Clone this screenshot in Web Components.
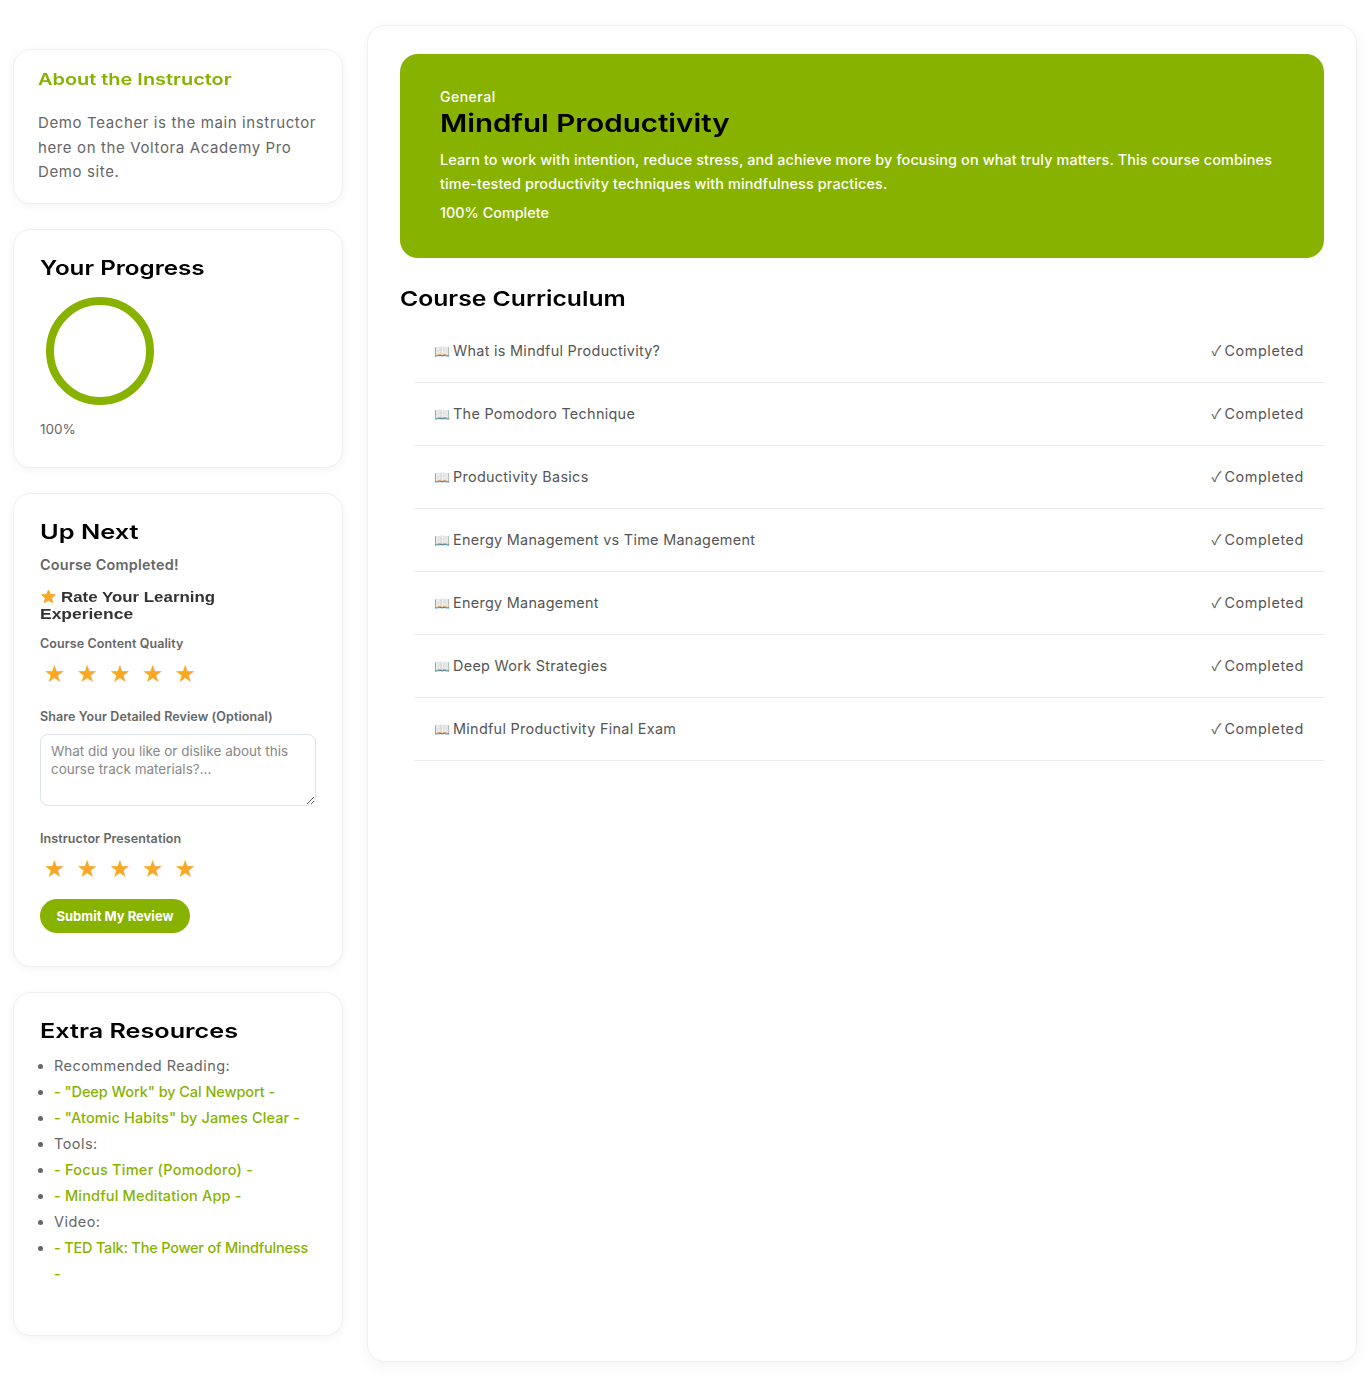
<!DOCTYPE html>
<html lang="en"><head><meta charset="utf-8"><title>Mindful Productivity</title>
<style>
html,body{margin:0;padding:0;background:#fff}
body{font-family:Inter,"Noto Sans",sans-serif;color:#666}
</style></head><body>
<course-page>
  <div slot="side">
    <side-card style="--pad:18px 24px 18.5px 24px">
      <card-title style="color:#88b200;font-size:16px;line-height:22px;--sx:1.245">About the Instructor</card-title>
      <about-text>Demo Teacher is the main instructor here on the Voltora Academy Pro Demo site.</about-text>
    </side-card>
    <side-card style="--pad:24px 26px 28px 26px">
      <card-title>Your Progress</card-title>
      <progress-ring value="100"></progress-ring>
    </side-card>
    <side-card style="--pad:24px 26px 33px 26px"><up-next></up-next></side-card>
    <side-card style="--pad:24px 26px 48px 26px"><card-title style="--sx:1.26">Extra Resources</card-title><resource-list></resource-list></side-card>
  </div>
  <main-panel slot="main">
    <course-hero></course-hero>
    <curriculum-list></curriculum-list>
  </main-panel>
</course-page>
<script>
const HEAD='Inter,"Liberation Sans",sans-serif';
const BODY='Inter,"Noto Sans",sans-serif';
function def(name,html){customElements.define(name,class extends HTMLElement{connectedCallback(){if(this.shadowRoot)return;const r=this.attachShadow({mode:'open'});r.innerHTML=html}})}

def('course-page',`<style>:host{display:block;width:1369px;height:1378px;box-sizing:border-box;background:#fff;overflow:hidden}
.g{display:grid;grid-template-columns:330px 990px;column-gap:24px;padding:25px 0 0 13px;align-items:start}
.s{padding-top:24px}</style><div class="g"><div class="s"><slot name="side"></slot></div><slot name="main"></slot></div>`);

def('side-card',`<style>:host{display:block;box-sizing:border-box;width:330px;background:#fff;border:1px solid #eef0f2;border-radius:18px;box-shadow:0 2px 10px rgba(0,0,0,.05);padding:var(--pad,24px 26px 28px 26px);margin-bottom:25px}</style><slot></slot>`);

def('card-title',`<style>:host{display:block;width:fit-content;font:600 20px/28px ${HEAD};color:#000;transform:scaleX(var(--sx,1.21));transform-origin:0 50%;white-space:nowrap}</style><slot></slot>`);

def('about-text',`<style>:host{display:block;margin-top:21px;font:400 15px/24.5px ${BODY};color:#666;letter-spacing:.62px}</style><slot></slot>`);

def('progress-ring',`<style>:host{display:block}svg{display:block;margin:15px 0 0 6px}
p{margin:14px 0 0;font:400 13.5px/20px ${BODY};color:#666}</style>
<svg width="108" height="108" viewBox="0 0 108 108"><circle cx="54" cy="54" r="50" fill="none" stroke="#88b200" stroke-width="8"/></svg><p>100%</p>`);

def('star-row',`<style>:host{display:flex;gap:8.5px;padding-left:2.5px;font:24px/30px "DejaVu Sans",sans-serif;color:#f9a825}span{display:block;width:24.2px;text-align:center}</style><span>★</span><span>★</span><span>★</span><span>★</span><span>★</span>`);

def('up-next',`<style>:host{display:block}
.done{margin:8px 0 0;font:600 14.4px/22px ${BODY};color:#666;letter-spacing:.25px}
h4{margin:13px 0 0;font:700 14.3px/16.5px "Liberation Sans",Arial,sans-serif;color:#333;height:32px}
h4 svg{display:inline-block;vertical-align:top;margin:0 5px 0 1px}
h4 span{display:inline-block;vertical-align:top;transform:scaleX(1.18);transform-origin:0 50%;white-space:nowrap}
h4 span.x{transform:scaleX(1.22)}
label{display:block;font:600 12.5px/18px ${BODY};color:#666;letter-spacing:.1px}
.a{margin-top:14px}.b{margin-top:18.5px}.c{margin-top:24px}
star-row{margin-top:6px}
textarea{display:block;box-sizing:border-box;width:276px;height:72px;margin:8.5px 0 0;padding:7px 10px;border:1px solid #dde3ee;border-radius:8px;font:400 13.5px/18px ${BODY};color:#666;background:#fff;outline:none}
textarea::placeholder{color:#888;opacity:1}
button{display:block;margin-top:15px;height:34px;width:150px;border:0;border-radius:17px;background:#88b200;color:#fff;font:700 13px/34px ${BODY};padding:0}
</style>
<card-title style="--sx:1.27">Up Next</card-title>
<p class="done">Course Completed!</p>
<h4><svg width="15" height="15" viewBox="0 0 15 15"><path d="M7.500 1 9.400 5.400l4.800.4-3.600 3.200 1.100 4.700-4.200-2.500-4.200 2.500 1.100-4.700L.8 5.800l4.800-.4z" fill="#f9a825" stroke="#f9a825" stroke-width="1" stroke-linejoin="round"/></svg><span>Rate Your Learning</span><br><span class="x">Experience</span></h4>
<label class="a">Course Content Quality</label><star-row></star-row>
<label class="b">Share Your Detailed Review (Optional)</label>
<textarea placeholder="What did you like or dislike about this course track materials?..."></textarea>
<label class="c">Instructor Presentation</label><star-row></star-row>
<button>Submit My Review</button>`);

def('resource-list',`<style>:host{display:block;margin-top:8px}
ul{margin:0;padding:0 0 0 14px;font:400 14.5px/26px ${BODY};color:#666;letter-spacing:.45px}
li::marker{color:#666}
a{color:#88b200;font-weight:500;text-decoration:none;letter-spacing:0}</style>
<ul><li>Recommended Reading:</li>
<li><a style="letter-spacing:-.07px">- "Deep Work" by Cal Newport -</a></li>
<li><a style="letter-spacing:.12px">- "Atomic Habits" by James Clear -</a></li>
<li>Tools:</li>
<li><a style="letter-spacing:.25px">- Focus Timer (Pomodoro) -</a></li>
<li><a style="letter-spacing:.17px">- Mindful Meditation App -</a></li>
<li>Video:</li>
<li><a style="letter-spacing:-.2px">- TED Talk: The Power of Mindfulness</a> <a>-</a></li></ul>`);

def('main-panel',`<style>:host{display:block;box-sizing:border-box;width:990px;height:1337px;background:#fff;border:1px solid #eef0f2;border-radius:18px;box-shadow:0 4px 16px rgba(0,0,0,.05);padding:28px 32px}</style><slot></slot>`);

def('course-hero',`<style>:host{display:block;box-sizing:border-box;height:204px;background:#88b200;border-radius:18px;padding:33px 40px;color:#fff}
.k{font:500 14px/20px ${BODY};letter-spacing:.5px}
h1{margin:0;width:fit-content;font:600 24.5px/32px ${HEAD};color:#000;transform:scaleX(1.205);transform-origin:0 50%;white-space:nowrap}
p{margin:9px 0 0;font:500 14.4px/24px ${BODY};letter-spacing:.13px}
.c{margin-top:5px;font:500 14.4px/24px ${BODY}}</style>
<div class="k">General</div><h1>Mindful Productivity</h1>
<p>Learn to work with intention, reduce stress, and achieve more by focusing on what truly matters. This course combines time-tested productivity techniques with mindfulness practices.</p>
<div class="c">100% Complete</div>`);

def('lesson-row',`<style>:host{display:flex;align-items:center;justify-content:space-between;box-sizing:border-box;height:63px;padding:0 20px;border-bottom:1px solid #e9ebee;font:400 14.4px/22px ${BODY};color:#555;letter-spacing:.3px}
.e{display:inline-block;width:19px;font-size:13px;letter-spacing:0;filter:hue-rotate(205deg) saturate(1.8)}
.s{letter-spacing:.6px;display:flex;gap:3px}.k{font:14.4px/20px "Noto Sans CJK JP",sans-serif;letter-spacing:0;height:22px;color:#666}</style>
<span><span class="e">📖</span><slot></slot></span>
<span class="s"><span class="k">✓</span><span>Completed</span></span>`);

def('curriculum-list',`<style>:host{display:block}
h2{margin:25px 0 5px;width:fit-content;font:600 20.5px/32px ${HEAD};color:#000;transform:scaleX(1.205);transform-origin:0 50%;white-space:nowrap}
.r{margin-left:14px}</style>
<h2>Course Curriculum</h2><div class="r">
<lesson-row>What is Mindful Productivity?</lesson-row>
<lesson-row>The Pomodoro Technique</lesson-row>
<lesson-row>Productivity Basics</lesson-row>
<lesson-row>Energy Management vs Time Management</lesson-row>
<lesson-row>Energy Management</lesson-row>
<lesson-row>Deep Work Strategies</lesson-row>
<lesson-row>Mindful Productivity Final Exam</lesson-row></div>`);
</script>
</body></html>
